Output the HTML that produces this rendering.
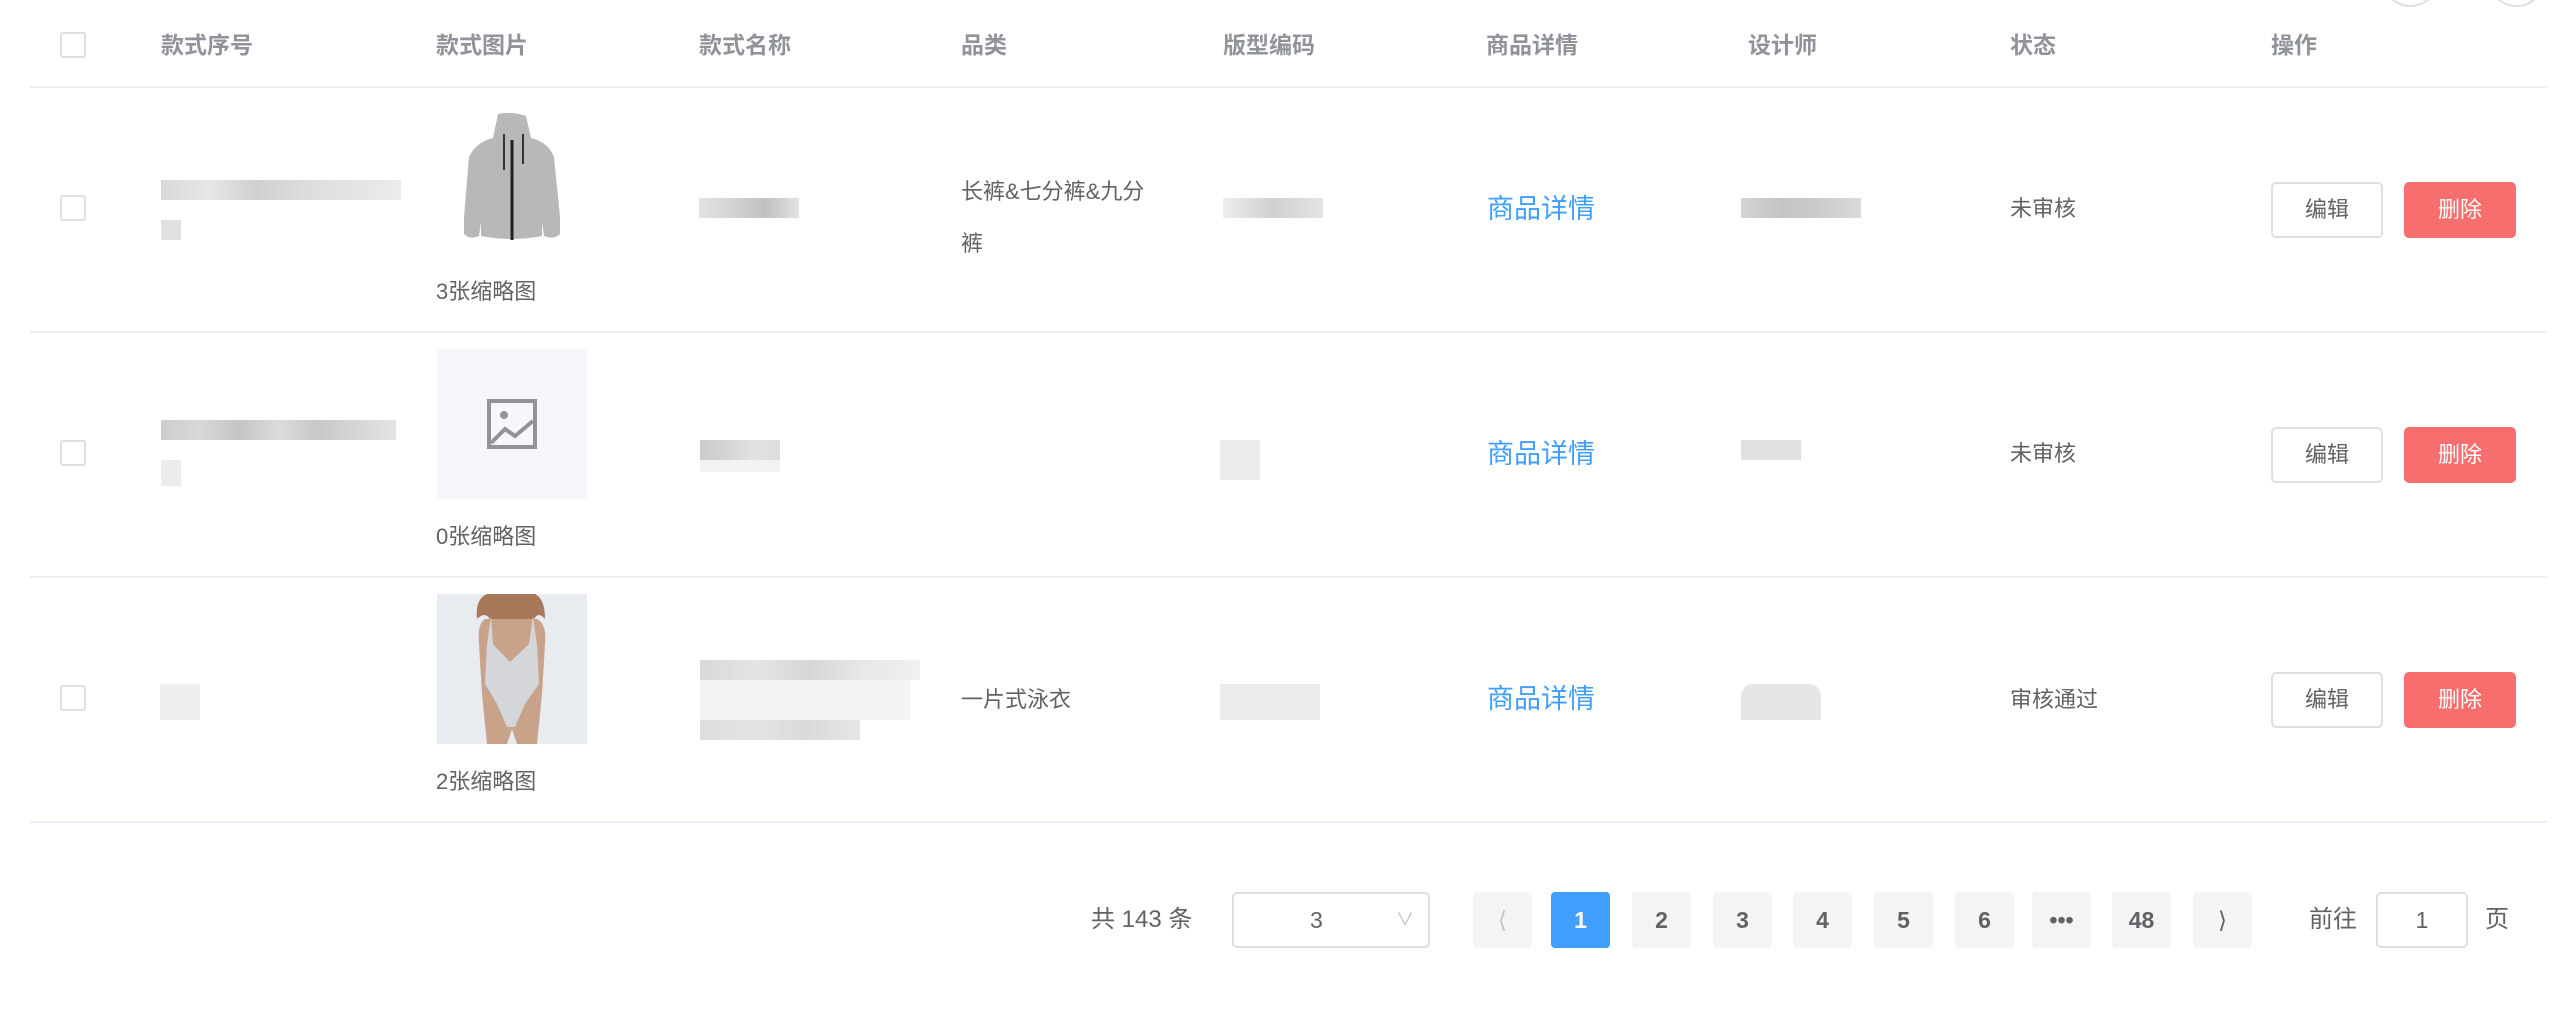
<!DOCTYPE html>
<html><head><meta charset="utf-8"><style>
*{margin:0;padding:0;box-sizing:border-box}
body{width:2571px;height:1011px;background:#fff;position:relative;overflow:hidden;font-family:"Liberation Sans","Noto Sans CJK SC",sans-serif;color:#606266}
.a{position:absolute}
.h{position:absolute;top:29px;font-size:23px;font-weight:bold;color:#909399;line-height:32px}
.line{position:absolute;left:30px;width:2517px;height:2px;background:#ebeef5}
.cb{position:absolute;left:60px;width:26px;height:26px;border:2px solid #dcdfe6;border-radius:3px;background:#fff}
.t{position:absolute;font-size:22px;line-height:32px;color:#606266;white-space:nowrap}
.lk{position:absolute;left:1487px;font-size:27px;color:#409eff;line-height:36px}
.btn{position:absolute;width:112px;height:56px;border-radius:5px;font-size:22px;line-height:52px;text-align:center}
.e{left:2271px;border:2px solid #dcdfe6;color:#606266;background:#fff}
.d{left:2404px;background:#f76e6e;color:#fff;border:2px solid #f76e6e}
.bl{position:absolute;height:20px}
.pg{position:absolute;top:892px;width:59px;height:56px;background:#f4f4f5;border-radius:4px;font-size:23px;font-weight:bold;color:#606266;text-align:center;line-height:56px}
.c{position:absolute;top:-50px;width:57px;height:57px;border:2px solid #dcdfe6;border-radius:50%}
</style></head><body>
<div class="c" style="left:2382px"></div><div class="c" style="left:2488px"></div>
<div class="cb" style="top:32px"></div>
<div class="h" style="left:161px">款式序号</div>
<div class="h" style="left:436px">款式图片</div>
<div class="h" style="left:699px">款式名称</div>
<div class="h" style="left:961px">品类</div>
<div class="h" style="left:1223px">版型编码</div>
<div class="h" style="left:1486px">商品详情</div>
<div class="h" style="left:1748px">设计师</div>
<div class="h" style="left:2010px">状态</div>
<div class="h" style="left:2271px">操作</div>
<div class="line" style="top:86px"></div>
<div class="line" style="top:331px"></div>
<div class="line" style="top:576px"></div>
<div class="line" style="top:821px"></div>

<!-- row1 -->
<div class="cb" style="top:195px"></div>
<div class="bl" style="left:161px;top:180px;width:240px;background:linear-gradient(90deg,#d8d8d8,#e6e6e6,#d0d0d0,#dcdcdc,#e4e4e4,#ececec)"></div>
<div class="bl" style="left:161px;top:220px;width:20px;background:#e0e0e0"></div>
<svg class="a" style="left:436px;top:112px" width="151" height="150" viewBox="0 0 151 150">
<path d="M62 2 Q76 -1 90 4 L95 26 Q112 30 118 45 L124 105 L124 122 Q118 128 108 124 L106 110 L106 124 Q75 130 45 124 L45 110 L43 124 Q33 128 28 122 L28 105 L33 45 Q40 30 57 26 Z" fill="#b8b8b8"/>
<path d="M76 28 L76 128" stroke="#222" stroke-width="3"/>
<path d="M68 22 L68 58 M87 22 L87 52" stroke="#333" stroke-width="2"/>
</svg>
<div class="t" style="left:436px;top:276px">3张缩略图</div>
<div class="bl" style="left:699px;top:198px;width:100px;background:linear-gradient(90deg,#e2e2e2,#d4d4d4,#c0c0c0,#e4e4e4)"></div>
<div class="t" style="left:961px;top:166px;line-height:52px;font-size:22px">长裤&amp;七分裤&amp;九分<br>裤</div>
<div class="bl" style="left:1223px;top:198px;width:100px;background:linear-gradient(90deg,#eee,#d0d0d0,#e4e4e4)"></div>
<div class="lk" style="top:191px">商品详情</div>
<div class="bl" style="left:1741px;top:198px;width:120px;background:linear-gradient(90deg,#d4d4d4,#c4c4c4,#cccccc,#dadada)"></div>
<div class="t" style="left:2010px;top:193px">未审核</div>
<div class="btn e" style="top:182px">编辑</div>
<div class="btn d" style="top:182px">删除</div>

<!-- row2 -->
<div class="cb" style="top:440px"></div>
<div class="bl" style="left:161px;top:420px;width:235px;background:linear-gradient(90deg,#cdcdcd,#d8d8d8,#c4c4c4,#dcdcdc,#c8c8c8,#d6d6d6,#e4e4e4)"></div>
<div class="bl" style="left:161px;top:460px;width:20px;height:26px;background:#ececec"></div>
<div class="a" style="left:437px;top:349px;width:150px;height:150px;background:#f5f7fa"></div>
<svg class="a" style="left:487px;top:399px" width="50" height="50" viewBox="0 0 50 50"><rect x="2" y="2" width="46" height="46" fill="none" stroke="#919398" stroke-width="4"/><circle cx="17" cy="16" r="4" fill="#919398"/><path d="M4 44 L18 30 L28 37 L46 22" fill="none" stroke="#919398" stroke-width="4"/></svg>
<div class="t" style="left:436px;top:521px">0张缩略图</div>
<div class="bl" style="left:700px;top:440px;width:80px;background:linear-gradient(90deg,#ccc,#d4d4d4,#e2e2e2,#ddd)"></div>
<div class="bl" style="left:700px;top:460px;width:80px;height:12px;background:#f2f2f2"></div>
<div class="bl" style="left:1220px;top:440px;width:40px;height:40px;background:#ececec"></div>
<div class="lk" style="top:436px">商品详情</div>
<div class="bl" style="left:1741px;top:440px;width:60px;background:#e0e0e0"></div>
<div class="t" style="left:2010px;top:438px">未审核</div>
<div class="btn e" style="top:427px">编辑</div>
<div class="btn d" style="top:427px">删除</div>

<!-- row3 -->
<div class="cb" style="top:685px"></div>
<div class="bl" style="left:160px;top:684px;width:40px;height:36px;background:#efefef"></div>
<svg class="a" style="left:437px;top:594px" width="150" height="150" viewBox="0 0 150 150">
<rect width="150" height="150" fill="#e8ebef"/>
<path d="M40 25 Q38 5 50 0 L98 0 Q108 5 108 25 Q100 15 95 30 L55 30 Q50 15 40 25 Z" fill="#a7785a"/>
<path d="M48 25 Q40 30 42 50 L45 100 L50 150 L70 150 L75 135 L80 150 L100 150 L105 100 L108 50 Q110 30 100 25 Z" fill="#c9a28a"/>
<path d="M54 22 L56 50 L73 68 L92 50 L96 22 L100 50 L102 90 L88 110 L78 133 L70 133 L60 110 L48 90 L50 50 Z" fill="#d4d6da"/>
</svg>
<div class="t" style="left:436px;top:766px">2张缩略图</div>
<div class="bl" style="left:700px;top:660px;width:220px;background:linear-gradient(90deg,#d8d8d8,#e4e4e4,#d6d6d6,#e8e8e8,#f0f0f0)"></div>
<div class="bl" style="left:700px;top:680px;width:210px;height:40px;background:#f3f3f3"></div>
<div class="bl" style="left:700px;top:720px;width:160px;background:linear-gradient(90deg,#ddd,#e4e4e4,#dadada,#e6e6e6)"></div>
<div class="t" style="left:961px;top:684px">一片式泳衣</div>
<div class="bl" style="left:1220px;top:684px;width:100px;height:36px;background:#ececec"></div>
<div class="lk" style="top:681px">商品详情</div>
<div class="bl" style="left:1741px;top:684px;width:80px;height:36px;background:#e6e6e6;border-radius:12px 12px 0 0"></div>
<div class="t" style="left:2010px;top:684px">审核通过</div>
<div class="btn e" style="top:672px">编辑</div>
<div class="btn d" style="top:672px">删除</div>

<!-- pagination -->
<div class="t" style="left:1091px;top:904px;font-size:24px">共 143 条</div>
<div class="a" style="left:1232px;top:892px;width:198px;height:56px;border:2px solid #dcdfe6;border-radius:5px;font-size:23px;line-height:52px;padding-left:76px;color:#606266">3<span style="position:absolute;right:14px;top:0;color:#c0c4cc;font-size:18px">&#8744;</span></div>
<div class="pg" style="left:1473px;color:#c0c4cc;font-weight:normal">&#10216;</div>
<div class="pg" style="left:1551px;background:#409eff;color:#fff">1</div>
<div class="pg" style="left:1632px">2</div>
<div class="pg" style="left:1713px">3</div>
<div class="pg" style="left:1793px">4</div>
<div class="pg" style="left:1874px">5</div>
<div class="pg" style="left:1955px">6</div>
<div class="pg" style="left:2032px">•••</div>
<div class="pg" style="left:2112px">48</div>
<div class="pg" style="left:2193px;font-weight:normal">&#10217;</div>
<div class="t" style="left:2309px;top:904px;font-size:24px">前往</div>
<div class="a" style="left:2376px;top:892px;width:92px;height:56px;border:2px solid #dcdfe6;border-radius:5px;font-size:23px;line-height:52px;text-align:center">1</div>
<div class="t" style="left:2485px;top:904px;font-size:24px">页</div>
</body></html>
